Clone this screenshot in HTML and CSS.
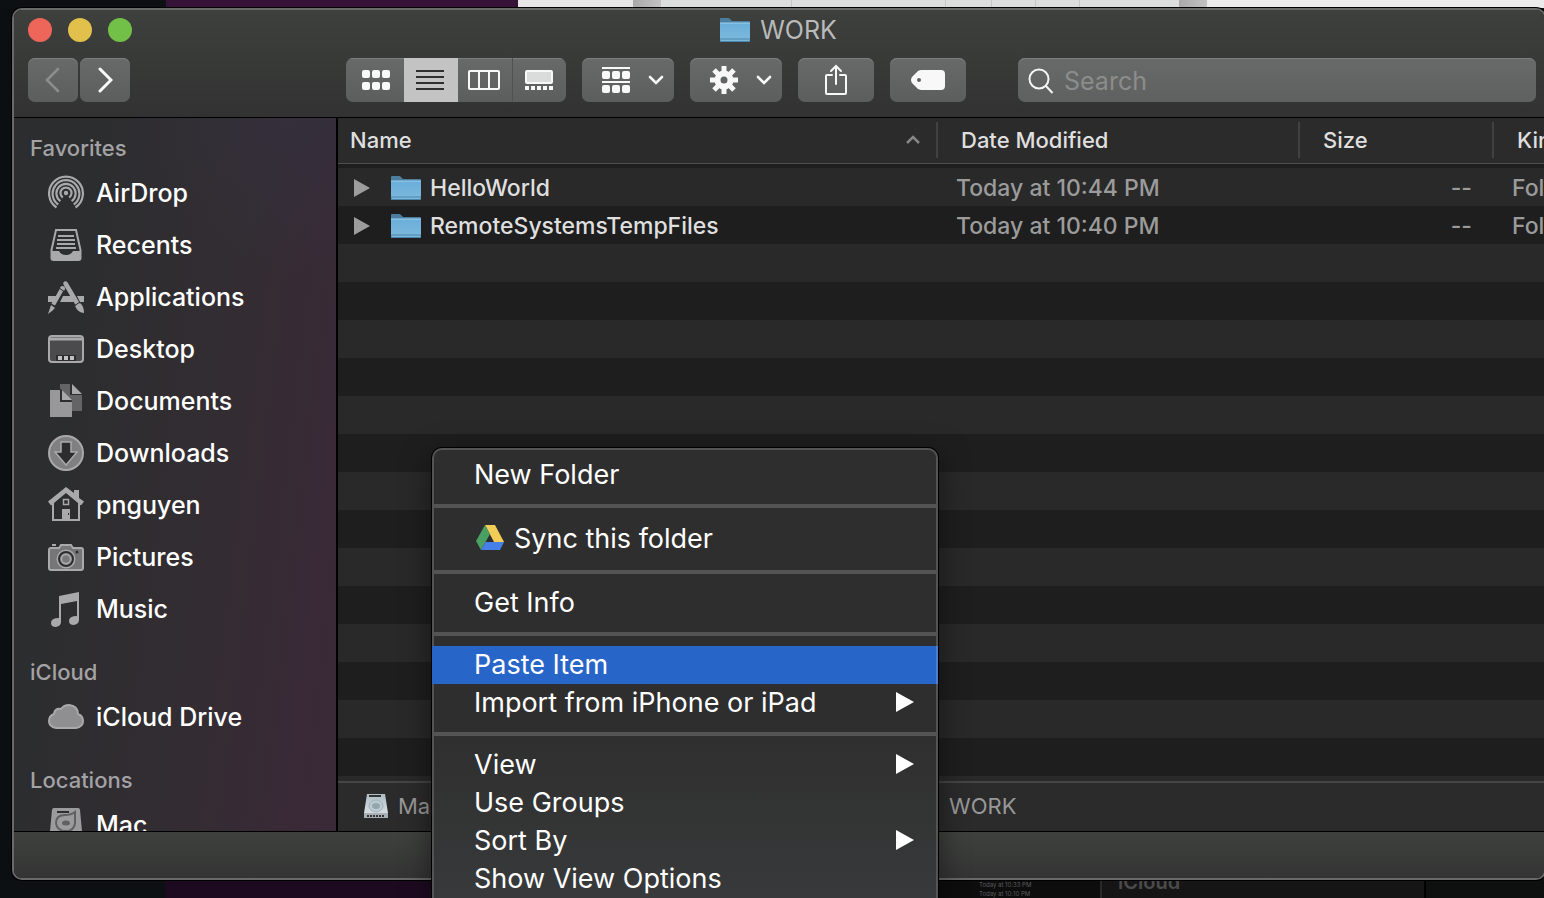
FILE: index.html
```html
<!DOCTYPE html>
<html lang="en">
<head>
<meta charset="utf-8">
<title>WORK</title>
<link rel="stylesheet" href="styles.css">
</head>
<body>
<svg class="defs" aria-hidden="true">
  <defs>
    <linearGradient id="folder-face" x1="0" y1="0" x2="0" y2="1">
      <stop offset="0" stop-color="#6aaedb"/><stop offset="1" stop-color="#7db9dc"/>
    </linearGradient>
    <linearGradient id="disk-face" x1="0" y1="0" x2="0" y2="1">
      <stop offset="0" stop-color="#aebdc6"/><stop offset="1" stop-color="#dfe6e9"/>
    </linearGradient>
    <symbol id="folder" viewBox="0 0 32 26">
      <path d="M1 5V2q0-1 1-1h7q1 0 2 1l2 2h17q1 0 1 1v6H1z" fill="#4c7f9f"/>
      <path d="M1 6h30v17q0 1-1 1H2q-1 0-1-1z" fill="url(#folder-face)"/>
      <path d="M1 6h30" stroke="#9fd3f0" stroke-width="1"/>
      <path d="M1 22h30M1 24.500h30" stroke="#4a86ab" stroke-width="1"/>
    </symbol>
    <symbol id="chevron" viewBox="0 0 16 10">
      <path d="M2 2l6 6 6-6" fill="none" stroke="currentColor" stroke-width="2.600" stroke-linecap="round"/>
    </symbol>
    <symbol id="play" viewBox="0 0 18 20"><path d="M0 0l18 10L0 20z" fill="currentColor"/></symbol>
  </defs>
</svg>
<div class="desktop">
  <div class="strip strip-top">
    <span class="wall"></span><span class="violet"></span><span class="paper"></span><span class="scroll"></span>
    <span class="sheet"><i></i><i></i><i></i><i></i><i></i></span><span class="scroll"></span><span class="paper-end"></span>
  </div>

  <main class="window">
    <header class="titlebar">
      <div class="title-row">
        <div class="lights">
          <button class="light red" aria-label="Close"></button>
          <button class="light yellow" aria-label="Minimize"></button>
          <button class="light green" aria-label="Zoom"></button>
        </div>
        <h1 class="title"><svg class="folder-icon"><use href="#folder"/></svg>WORK</h1>
      </div>
      <div class="toolbar">
        <div class="history">
          <button class="tool nav dim" aria-label="Back"><svg width="16" height="26" viewBox="0 0 16 26"><path d="M13 2L2 13l11 11" fill="none" stroke="currentColor" stroke-width="2.600" stroke-linecap="round"/></svg></button>
          <button class="tool nav" aria-label="Forward"><svg width="16" height="26" viewBox="0 0 16 26"><path d="M3 2l11 11L3 24" fill="none" stroke="currentColor" stroke-width="3" stroke-linecap="round"/></svg></button>
        </div>
        <div class="tools">
          <div class="views">
            <button class="tool seg wide" aria-label="Icons"><svg width="28" height="20" viewBox="0 0 28 20" fill="currentColor"><rect width="8" height="8" rx="2"/><rect x="10" width="8" height="8" rx="2"/><rect x="20" width="8" height="8" rx="2"/><rect y="12" width="8" height="8" rx="2"/><rect x="10" y="12" width="8" height="8" rx="2"/><rect x="20" y="12" width="8" height="8" rx="2"/></svg></button>
            <button class="tool seg on" aria-label="List"><svg width="28" height="20" viewBox="0 0 28 20" stroke="currentColor" stroke-width="2"><path d="M0 1h28M0 7h28M0 13h28M0 19h28"/></svg></button>
            <button class="tool seg" aria-label="Columns"><svg width="32" height="20" viewBox="0 0 32 20" fill="none" stroke="currentColor" stroke-width="2"><rect x="1" y="1" width="30" height="18" rx="1"/><path d="M11 1v18M21 1v18"/></svg></button>
            <button class="tool seg split" aria-label="Gallery"><svg width="28" height="20" viewBox="0 0 28 20" fill="currentColor"><rect x="1" y="1" width="26" height="12" rx="1" fill="#dadcdb" stroke="currentColor" stroke-width="2"/><path d="M0 16h4v4H0zM6 16h4v4H6zM12 16h4v4h-4zM18 16h4v4h-4zM24 16h4v4h-4z"/></svg></button>
          </div>
          <button class="tool drop" aria-label="Group"><svg width="28" height="28" viewBox="0 0 28 28" fill="currentColor"><path d="M0 1h28v2H0zM0 15h28v2H0z"/><rect y="5" width="8" height="8" rx="2"/><rect x="10" y="5" width="8" height="8" rx="2"/><rect x="20" y="5" width="8" height="8" rx="2"/><rect y="19" width="8" height="8" rx="2"/><rect x="10" y="19" width="8" height="8" rx="2"/><rect x="20" y="19" width="8" height="8" rx="2"/></svg><svg class="chev"><use href="#chevron"/></svg></button>
          <button class="tool drop" aria-label="Action"><svg width="28" height="28" viewBox="-14 -14 28 28"><g stroke="currentColor" stroke-width="5"><path d="M0-14V-7M0 14V7M-14 0h7M14 0H7M-10-10l5 5M10-10l-5 5M-10 10l5-5M10 10l-5-5"/></g><circle r="6.500" fill="none" stroke="currentColor" stroke-width="6"/></svg><svg class="chev"><use href="#chevron"/></svg></button>
          <button class="tool single" aria-label="Share"><svg width="24" height="32" viewBox="0 0 24 32" fill="none" stroke="currentColor" stroke-width="2" stroke-linecap="round"><path d="M8 11H3q-1 0-1 1v17q0 1 1 1h18q1 0 1-1V12q0-1-1-1h-5M12 20V2M7 7l5-5 5 5"/></svg></button>
          <button class="tool single" aria-label="Tags"><svg width="34" height="20" viewBox="0 0 34 20"><path fill="currentColor" fill-rule="evenodd" d="M10 0h20q4 0 4 4v12q0 4-4 4H10q-3 0-5-3l-4-4q-2-3 0-6l4-4q2-3 5-3zM8 8a2 2 0 100 4 2 2 0 000-4z"/></svg></button>
        </div>
        <label class="search">
          <svg width="26" height="26" viewBox="0 0 26 26" fill="none" stroke="#f4f4f4" stroke-width="2"><circle cx="11" cy="11" r="9.500"/><path d="M17.500 17.500l7 7.500"/></svg>
          <input type="search" placeholder="Search" aria-label="Search">
        </label>
      </div>
    </header>

    <div class="body">
      <nav class="sidebar">
        <h2>Favorites</h2>
        <ul>
          <li><a href="#"><svg viewBox="0 0 36 36" fill="none" stroke="currentColor" stroke-width="2.200"><circle cx="18" cy="18" r="2.200" fill="currentColor" stroke="none"/><path d="M14.800 22.500a5.500 5.500 0 116.400 0M12.400 26.200a9.600 9.600 0 1111.200 0M10.200 29.500a13.400 13.400 0 1115.600 0M8.500 32.500a16.900 16.900 0 1119 0"/></svg>AirDrop</a></li>
          <li><a href="#"><svg viewBox="0 0 36 36"><path d="M8 3h20l4.500 20v8q0 2-2 2h-25q-2 0-2-2v-8z" fill="none" stroke="currentColor" stroke-width="2"/><path d="M3 24h8q2 4 7 4t7-4h8v9H3z" fill="currentColor"/><path d="M10 9h16M9 13h18M9 17h18M8 21h20" stroke="currentColor" stroke-width="2"/></svg>Recents</a></li>
          <li><a href="#"><svg viewBox="0 0 36 36"><path d="M0 17h9l-3 6H0zM15 17h8l3 6H12zM29 17h7v6h-4z" fill="currentColor"/><path d="M14 10L5 26" stroke="currentColor" stroke-width="4"/><circle cx="14.500" cy="9.500" r="2.500" fill="currentColor"/><path d="M17.500 4.500L29 24" stroke="currentColor" stroke-width="4.500" stroke-linecap="round"/><path d="M3 26l4 3-3 3-4 3zM27 27l5-3q4 3 4 10-6 0-9-7z" fill="currentColor"/><path d="M26 27l6-4M3 25l6 3M11 9l6 4" stroke="#2e2e30" stroke-width="1"/></svg>Applications</a></li>
          <li><a href="#"><svg viewBox="0 0 36 36"><rect x="1" y="5" width="34" height="26" rx="3" fill="#4b4b4d" stroke="currentColor" stroke-width="2"/><path d="M1 8h34" stroke="currentColor" stroke-width="3"/><path d="M8 24h20v6H8z" fill="#2d2d2f"/><path d="M10 25h4v4h-4zM16 25h4v4h-4zM22 25h4v4h-4z" fill="#c0c0c2"/></svg>Desktop</a></li>
          <li><a href="#"><svg viewBox="0 0 36 36"><path d="M12 1h10v11h12v16H12z" fill="#646466"/><path d="M24 1v10h10z" fill="currentColor"/><path d="M1 6h12l11 12v17H1z" fill="#2d2d2f"/><path d="M2 7h10v12h12v15H2z" fill="#98989a"/><path d="M14 7v10h10z" fill="currentColor"/></svg>Documents</a></li>
          <li><a href="#"><svg viewBox="0 0 36 36"><circle cx="18" cy="18" r="17" fill="#808082" stroke="currentColor" stroke-width="2"/><path d="M13 7h10v10h6L18 30 7 17h6z" fill="#2c2c2e" stroke="currentColor" stroke-width="1.500"/></svg>Downloads</a></li>
          <li><a href="#"><svg viewBox="0 0 36 36"><path d="M0 14.500L18 0l8 6V3h5v8l5 3.500-3 4L18 6 3 18.500z" fill="currentColor"/><path d="M5 15v18h26V15" fill="none" stroke="currentColor" stroke-width="2"/><path d="M15.500 12.500h5v5h-5z" fill="none" stroke="currentColor" stroke-width="1.500"/><path d="M14 22h8v11h-8z" fill="currentColor"/><path d="M20.500 26v2" stroke="#2d2d2f"/></svg>pnguyen</a></li>
          <li><a href="#"><svg viewBox="0 0 36 36"><path d="M3 9h8l2-3h10l2 3h8q2 0 2 2v18q0 2-2 2H3q-2 0-2-2V11q0-2 2-2z" fill="#767678" stroke="currentColor" stroke-width="2"/><path d="M4 6h4" stroke="currentColor" stroke-width="2"/><circle cx="18" cy="20" r="8.500" fill="#a9a9ab" stroke="#a9a9ab" stroke-width="2"/><circle cx="18" cy="20" r="7" fill="#8b8b8d" stroke="#2d2d2f" stroke-width="2"/><circle cx="18" cy="20" r="4.500" fill="#79797b" stroke="currentColor" stroke-width="1.500"/><circle cx="29" cy="13" r="1.500" fill="#2d2d2f"/></svg>Pictures</a></li>
          <li><a href="#"><svg viewBox="0 0 36 36" fill="currentColor"><path d="M11 5l20-4v28q0 4-5 5-5 0-5-4 0-5 8-5V10l-16 3v18q0 4-5 5-5 0-5-4 0-5 8-5z"/></svg>Music</a></li>
        </ul>
        <h2>iCloud</h2>
        <ul>
          <li><a href="#"><svg viewBox="0 0 36 36"><path d="M8 29q-7-1-7-7 0-5 5-7 1-6 7-5 3-4 8-4 9 1 9 9 5 2 5 7 0 6-7 7z" fill="#8f8f91" stroke="currentColor" stroke-width="2"/></svg>iCloud Drive</a></li>
        </ul>
        <h2>Locations</h2>
        <ul>
          <li><a href="#"><svg viewBox="0 0 36 36"><path d="M6 1h24q2 0 2 2l2 21v11H2V24L4 3q0-2 2-2z" fill="#9b9b9d"/><path d="M9 5h12" stroke="#2d2d2f" stroke-width="2"/><path d="M27 5v11q-1 8-9 8-9 0-10-8 0-8 9-8 6 0 10-3z" fill="none" stroke="#606062" stroke-width="2"/><ellipse cx="18" cy="16" rx="4" ry="2.500" fill="#606062"/></svg>Mac</a></li>
        </ul>
      </nav>

      <section class="content">
        <div class="list">
          <table class="files">
            <thead>
              <tr>
                <th class="c-name"><span class="cell">Name<svg class="sort" viewBox="0 0 16 10"><path d="M2 8l6-6 6 6" fill="none" stroke="currentColor" stroke-width="2.500"/></svg></span></th>
                <th class="c-date"><span class="cell">Date Modified</span></th>
                <th class="c-size"><span class="cell">Size</span></th>
                <th class="c-kind"><span class="cell">Kind</span></th>
              </tr>
            </thead>
            <tbody>
              <tr><td><span class="file"><svg class="twist"><use href="#play"/></svg><svg class="folder-icon"><use href="#folder"/></svg>HelloWorld</span></td><td class="meta date">Today at 10:44 PM</td><td class="meta size">--</td><td class="meta kind">Folder</td></tr>
              <tr><td><span class="file"><svg class="twist"><use href="#play"/></svg><svg class="folder-icon"><use href="#folder"/></svg>RemoteSystemsTempFiles</span></td><td class="meta date">Today at 10:40 PM</td><td class="meta size">--</td><td class="meta kind">Folder</td></tr>
            </tbody>
          </table>
        </div>
        <footer class="path">
          <span class="crumb"><svg width="26" height="26" viewBox="0 0 26 26"><path d="M4 1h18l3 19v4q0 1-1 1H2q-1 0-1-1v-4z" fill="url(#disk-face)"/><path d="M6 3h12" stroke="#333" stroke-width="2"/><ellipse cx="13" cy="13" rx="7" ry="6" fill="#bccbd2" stroke="#a3b1b9"/><ellipse cx="13" cy="13" rx="4" ry="3" fill="#95a5ae"/><path d="M1 20h24v4q0 1-1 1H2q-1 0-1-1z" fill="#a9b0b3"/><path d="M4 23h18" stroke="#333" stroke-width="2" stroke-dasharray="2 1"/></svg>Mac</span>
          <span class="crumb">WORK</span>
        </footer>
      </section>
    </div>
    <div class="status"></div>
  </main>

  <div class="strip strip-bottom">
    <span class="wall"></span><span class="violet-dark"></span>
    <span class="stamps"><small>Today at 10:33 PM</small><small>Today at 10:10 PM</small></span>
    <span class="behind">iCloud</span><span class="behind-end"></span>
  </div>

  <ul class="menu">
    <li><button>New Folder</button></li>
    <li class="sep"></li>
    <li><button class="tall"><svg width="28" height="26" viewBox="0 0 28 26"><path d="M9 0h10l9 17H18z" fill="#f3cb57"/><path d="M9 0L0 16l5 9L14 9z" fill="#4a9f62"/><path d="M9.500 17H28l-4 8H5z" fill="#467fe8"/></svg>Sync this folder</button></li>
    <li class="sep"></li>
    <li><button>Get Info</button></li>
    <li class="sep"></li>
    <li><button class="active">Paste Item</button></li>
    <li><button>Import from iPhone or iPad<svg class="more"><use href="#play"/></svg></button></li>
    <li class="sep"></li>
    <li><button>View<svg class="more"><use href="#play"/></svg></button></li>
    <li><button>Use Groups</button></li>
    <li><button>Sort By<svg class="more"><use href="#play"/></svg></button></li>
    <li><button>Show View Options</button></li>
  </ul>
</div>
</body>
</html>
```
FILE: styles.css
```css
* { box-sizing: border-box; }
body { margin: 0; background: #0c0f11; font-family: Inter, "Liberation Sans", sans-serif; overflow: hidden; }
button, input { font: inherit; color: inherit; border: 0; padding: 0; background: none; }
ul { list-style: none; margin: 0; padding: 0; }
svg { flex: none; }
.defs { position: absolute; width: 0; height: 0; }

.desktop { position: relative; height: 100vh; display: grid; grid-template-rows: 8px minmax(0, 1fr) 18px; overflow: hidden; }
.strip { display: flex; overflow: hidden; min-width: 0; }
.strip span { flex: none; }
.wall { width: 166px; background: #0d1012; }
.violet { width: 352px; background: #361239; }
.paper { width: 115px; background: #e6e6e6; }
.scroll { width: 28px; background: linear-gradient(90deg, #a9a9a9, #c2c2c2); }
.strip .sheet { display: flex; flex: 0 0 518px; background: #dcdede; padding-left: 130px; }
.sheet i { border-left: 1px solid #c4c6c6; flex: 0 0 44px; }
.sheet i:first-child { flex: 0 0 154px; }
.sheet i:nth-child(2) { flex: 0 0 46px; }
.strip .paper-end { flex: 1; background: #ebebeb; }
.violet-dark { width: 772px; background: #1d0a20; }
.stamps { width: 164px; background: #0d0d0d; color: #5c5c5c; line-height: 9px; border-right: 2px solid #2a2a2a; padding-left: 41px; display: flex; flex-direction: column; justify-content: center; }
.stamps small { font-size: 6px; }
.behind { width: 324px; background: #151515; border-right: 2px solid #000; color: #4b4b4b; font-size: 20px; line-height: 4px; font-weight: 600; padding-left: 16px; }
.strip .behind-end { flex: 1; background: #0e0f0f; }

.window { margin: 0 -2px 0 12px; display: flex; flex-direction: column; min-height: 0; border: 2px solid #686968; border-radius: 10px; box-shadow: 0 0 0 1px #000; overflow: hidden; z-index: 1; }
.titlebar { background: linear-gradient(#3e403e, #313231); border-bottom: 1px solid #000; padding: 0 8px 15px 14px; }
.title-row { display: flex; align-items: center; height: 40px; margin-bottom: 8px; position: relative; }
.lights { display: flex; gap: 16px; }
.light { width: 24px; height: 24px; border-radius: 50%; }
.red { background: #ee6559; }
.yellow { background: #e2c04c; }
.green { background: #72c048; }
.title { position: absolute; inset: 0; margin: 0; padding-right: 8px; pointer-events: none; display: flex; align-items: center; justify-content: center; gap: 9px; font-size: 25px; font-weight: 400; color: #b9bab9; }
.folder-icon { width: 32px; height: 26px; }
.toolbar { display: flex; align-items: center; }
.history { display: flex; gap: 2px; margin-right: 216px; }
.tools { display: flex; gap: 16px; margin-right: 52px; }
.tool { height: 44px; border-radius: 7px; background: linear-gradient(#686a69, #5c5e5d); box-shadow: inset 0 1px #7d7f7e; color: #f7f8f7; display: flex; align-items: center; justify-content: center; }
.nav { width: 50px; }
.dim { color: #8b8d8c; }
.views { display: flex; border-radius: 7px; overflow: hidden; }
.seg { width: 54px; border-radius: 0; padding-right: 2px; }
.wide { width: 58px; padding: 0 0 0 2px; }
.on { background: #c2c3c2; color: #2e2e2e; box-shadow: none; }
.split { border-left: 1px solid #505251; }
.drop { width: 92px; justify-content: space-between; padding: 0 10px 0 20px; }
.chev { width: 16px; height: 10px; }
.single { width: 76px; }
.search { flex: 1; min-width: 0; height: 44px; border-radius: 7px; background: linear-gradient(#686a69, #5f6160); box-shadow: inset 0 1px #7d7f7e; display: flex; align-items: center; gap: 10px; padding: 2px 10px 0; }
.search input { flex: 1; min-width: 0; font-size: 25px; outline: 0; appearance: none; color: #fff; }
.search input::placeholder { color: #8b8d8c; opacity: 1; }

.body { flex: 1; min-height: 0; display: flex; border-bottom: 1px solid #000; }
.sidebar { flex: 0 0 324px; overflow: hidden; padding: 12px 16px 0; border-right: 2px solid #000; background: radial-gradient(ellipse 200px 160px at 90% 0, #34324280, transparent), linear-gradient(97deg, #2b2d2e 15%, #322d32 55%, #3a2937 95%); }
.sidebar h2 { margin: 0; height: 36px; line-height: 36px; font-size: 22px; font-weight: 500; color: #a3a2a5; }
.sidebar ul { margin-bottom: 20px; }
.sidebar a { display: flex; align-items: center; gap: 12px; height: 52px; padding: 1px 0 0 18px; font-size: 25px; font-weight: 500; color: #fff; text-decoration: none; }
.sidebar svg { width: 36px; height: 36px; color: #a9a9ab; }

.content { flex: 1; min-width: 0; display: flex; flex-direction: column; background: #2b2b2b; }
.list { flex: 1; min-height: 0; overflow: hidden; background: repeating-linear-gradient(#292929 0 38px, #1e1e1e 38px 76px) 0 50px; }
.files { width: 100%; table-layout: fixed; border-collapse: separate; border-spacing: 0; font-size: 23px; font-weight: 500; color: #dfdfdf; }
th { padding: 0; height: 50px; text-align: left; vertical-align: top; background: linear-gradient(#2b2b2b 45px, #4d4d4d 45px 46px, #1e1e1e 46px); font-size: 22px; font-weight: 500; }
.cell { display: flex; align-items: center; justify-content: space-between; height: 36px; margin-top: 4px; padding: 0 15px 0 23px; border-right: 2px solid #414141; }
.c-name { width: 600px; }
.c-name .cell { padding-left: 12px; }
.c-date { width: 362px; }
.c-size { width: 194px; }
.c-kind .cell { border: 0; padding-right: 0; }
.sort { width: 16px; height: 10px; color: #858585; }
td { height: 38px; padding: 1px 0 0; white-space: nowrap; overflow: hidden; }
.file { display: flex; align-items: center; padding-left: 16px; }
.twist { width: 16px; height: 18px; color: #9d9d9d; margin-right: 20px; }
.file .folder-icon { margin-right: 8px; }
.meta { color: #9b9b9b; }
.date { padding-left: 18px; }
.size { text-align: right; padding-right: 22px; }
.kind { padding-left: 18px; }
.path { flex: none; height: 50px; display: flex; align-items: center; border-top: 2px solid #454545; padding: 0 0 2px 25px; color: #989898; font-size: 22px; }
.crumb { display: flex; align-items: center; gap: 9px; flex: 0 0 586px; }
.status { height: 46px; background: linear-gradient(#3f413f, #333433); }

.menu { position: absolute; z-index: 2; top: 448px; left: 432px; width: 506px; padding-top: 6px; border: 2px solid #545454; border-bottom: 0; border-radius: 10px 10px 0 0; background: linear-gradient(#2e2e2e 60%, #38393a); box-shadow: 0 0 0 1px #000, 0 8px 30px rgba(0, 0, 0, .5); color: #fff; font-size: 27px; }
.menu button { display: flex; align-items: center; width: 100%; height: 38px; padding: 0 22px 2px 40px; text-align: left; }
.menu .tall { height: 42px; gap: 10px; padding-left: 42px; }
.menu .active { background: #2865c9; box-shadow: -2px 0 #2865c9, 2px 0 #4b7fd6; }
.sep { height: 4px; margin: 10px 0; background: #545454; }
.more { width: 18px; height: 20px; margin-left: auto; }
```
